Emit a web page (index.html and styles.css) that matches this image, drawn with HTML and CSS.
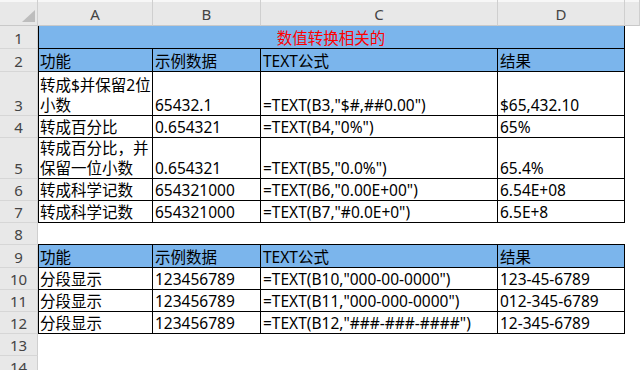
FILE: index.html
```html
<!DOCTYPE html>
<html lang="zh-CN">
<head>
<meta charset="utf-8">
<title>数值转换相关的</title>
<link rel="stylesheet" href="styles.css">
</head>
<body>
<div class="sheet">
  <div class="corner"><svg class="tri" width="13" height="12" viewBox="0 0 13 12"><polygon points="13,0 13,12 0,12" fill="#bdbdbd"/></svg></div>
  <div class="ch">A</div><div class="ch">B</div><div class="ch">C</div><div class="ch">D</div><div class="ch"></div>

  <div class="rh">1</div><div class="c a title">数值转换相关的</div><div class="x"></div>

  <div class="rh">2</div><div class="c a hd">功能</div><div class="c hd">示例数据</div><div class="c hd">TEXT公式</div><div class="c hd">结果</div><div class="x"></div>

  <div class="rh">3</div><div class="c a">转成$并保留2位<br>小数</div><div class="c">65432.1</div><div class="c">=TEXT(B3,"$#,##0.00")</div><div class="c">$65,432.10</div><div class="x"></div>

  <div class="rh">4</div><div class="c a">转成百分比</div><div class="c">0.654321</div><div class="c">=TEXT(B4,"0%")</div><div class="c">65%</div><div class="x"></div>

  <div class="rh">5</div><div class="c a">转成百分比，并<br>保留一位小数</div><div class="c">0.654321</div><div class="c">=TEXT(B5,"0.0%")</div><div class="c">65.4%</div><div class="x"></div>

  <div class="rh">6</div><div class="c a">转成科学记数</div><div class="c">654321000</div><div class="c">=TEXT(B6,"0.00E+00")</div><div class="c">6.54E+08</div><div class="x"></div>

  <div class="rh">7</div><div class="c a">转成科学记数</div><div class="c">654321000</div><div class="c">=TEXT(B7,"#0.0E+0")</div><div class="c">6.5E+8</div><div class="x"></div>

  <div class="rh">8</div><div class="gap"></div><div class="x"></div>

  <div class="rh">9</div><div class="c a hd">功能</div><div class="c hd">示例数据</div><div class="c hd">TEXT公式</div><div class="c hd">结果</div><div class="x"></div>

  <div class="rh">10</div><div class="c a">分段显示</div><div class="c">123456789</div><div class="c">=TEXT(B10,"000-00-0000")</div><div class="c">123-45-6789</div><div class="x"></div>

  <div class="rh">11</div><div class="c a">分段显示</div><div class="c">123456789</div><div class="c">=TEXT(B11,"000-000-0000")</div><div class="c">012-345-6789</div><div class="x"></div>

  <div class="rh">12</div><div class="c a">分段显示</div><div class="c">123456789</div><div class="c">=TEXT(B12,"###-###-####")</div><div class="c">12-345-6789</div><div class="x"></div>

  <div class="rh">13</div><div class="blank"></div><div class="x"></div>

  <div class="rh">14</div><div class="blank"></div><div class="x"></div>
</div>
</body>
</html>
```

FILE: styles.css
```css
html, body {
  margin: 0;
  padding: 0;
  background: #fff;
  overflow: hidden;
}

.sheet {
  display: grid;
  grid-template-columns: 38px 115px 108px 237px 127px 1fr;
  grid-template-rows: 26px 23px 23px 44px 22px 41px 22px 22px 22px 23px 22px 22px 22px 22px 22px;
  width: 640px;
  font-family: "Noto Sans", "Noto Sans CJK SC", sans-serif;
  font-size: 15px;
}

.corner {
  background: linear-gradient(#f7f7f7 0 2px, #e8e8e8 2px);
  border-right: 1px solid #cfcfcf;
  border-bottom: 1px solid #c9c9c9;
  box-sizing: border-box;
  display: flex;
  justify-content: flex-end;
  align-items: flex-end;
  padding: 0 2px 3px 0;
}

.ch {
  background: linear-gradient(#f7f7f7 0 2px, #e8e8e8 2px);
  border-right: 1px solid #cfcfcf;
  border-bottom: 1px solid #c9c9c9;
  box-sizing: border-box;
  display: flex;
  justify-content: center;
  align-items: center;
  padding-top: 2px;
  color: #444;
  line-height: 20px;
}

.rh {
  background: #e8e8e8;
  border-right: 1px solid #cfcfcf;
  border-bottom: 1px solid #d6d6d6;
  box-sizing: border-box;
  display: flex;
  justify-content: center;
  align-items: flex-end;
  color: #444;
  line-height: 20px;
}

.c {
  border-right: 1px solid #000;
  border-bottom: 1px solid #000;
  box-sizing: border-box;
  display: flex;
  align-items: flex-end;
  padding: 0 2px;
  font-size: 15.5px;
  line-height: 20px;
  color: #000;
  white-space: nowrap;
  overflow: hidden;
}

.a {
  border-left: 1px solid #000;
  padding-left: 1px;
}

.hd {
  background: #7bb5ec;
}

.title {
  grid-column: span 4;
  background: #7bb5ec;
  color: #ff0000;
  justify-content: center;
}

.gap {
  grid-column: span 4;
  border-bottom: 1px solid #000;
}

.blank {
  grid-column: span 4;
}

.x {
  background: #fff;
}
```
